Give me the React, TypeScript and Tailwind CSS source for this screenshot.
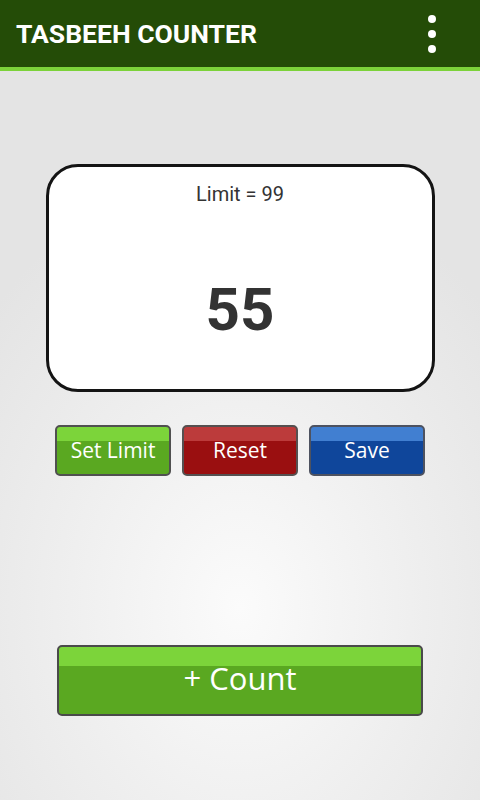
import React, { useState } from 'react';

const App: React.FC = () => {
  const [count, setCount] = useState(55);
  const [limit] = useState(99);

  return (
    <div className="w-[480px] h-[800px] flex flex-col overflow-hidden bg-[radial-gradient(ellipse_70%_55%_at_50%_76%,#fbfbfb_0%,#eeeeee_55%,#e4e4e4_100%)]">
      {/* Action bar */}
      <div className="h-[71px] shrink-0 bg-[#244c07] border-b-4 border-[#7cd23a] flex items-center justify-between pl-4 pr-[44px]">
        <h1 className="text-white text-[26.5px] font-bold font-['Roboto',sans-serif] leading-none mt-[1px]">
          TASBEEH COUNTER
        </h1>
        <div className="flex flex-col gap-[7px] items-center">
          <span className="w-[8px] h-[8px] rounded-full bg-white"></span>
          <span className="w-[8px] h-[8px] rounded-full bg-white"></span>
          <span className="w-[8px] h-[8px] rounded-full bg-white"></span>
        </div>
      </div>

      <div className="flex flex-col items-center">
        {/* Counter display */}
        <div className="mt-[93px] w-[389px] h-[228px] bg-white border-[3px] border-[#141414] rounded-[32px] flex flex-col items-center font-['Roboto',sans-serif]">
          <div className="mt-[17px] text-[20px] text-[#333333] font-normal leading-none">
            Limit = {limit}
          </div>
          <div className="mt-[76px] text-[60px] font-bold text-[#333333] leading-none">{count}</div>
        </div>

        {/* Action buttons */}
        <div className="mt-[33px] flex gap-[11px] font-['Open_Sans',sans-serif]">
          <button className="w-[116px] h-[51px] rounded-[5px] border-2 border-[#505050] text-white text-[21px] bg-[linear-gradient(#7cd43a_0%,#7cd43a_30%,#5aa821_30%,#5aa821_100%)] leading-none pb-[1px]">
            Set Limit
          </button>
          <button
            onClick={() => setCount(0)}
            className="w-[116px] h-[51px] rounded-[5px] border-2 border-[#555050] text-white text-[21px] bg-[linear-gradient(#bc3b3b_0%,#bc3b3b_30%,#9a0f10_30%,#9a0f10_100%)] leading-none pb-[1px]"
          >
            Reset
          </button>
          <button className="w-[116px] h-[51px] rounded-[5px] border-2 border-[#4d5260] text-white text-[21px] bg-[linear-gradient(#417fd1_0%,#417fd1_30%,#0f469b_30%,#0f469b_100%)] leading-none pb-[1px]">
            Save
          </button>
        </div>

        {/* Count button */}
        <button
          onClick={() => setCount((c) => (c >= limit ? limit : c + 1))}
          className="mt-[169px] w-[366px] h-[71px] rounded-[5px] border-2 border-[#4a4a4a] text-white text-[31px] font-['Open_Sans',sans-serif] bg-[linear-gradient(#7cd43a_0%,#7cd43a_28%,#5aa821_28%,#5aa821_100%)] leading-none pb-[4px]"
        >
          + Count
        </button>
      </div>
    </div>
  );
};

export default App;
